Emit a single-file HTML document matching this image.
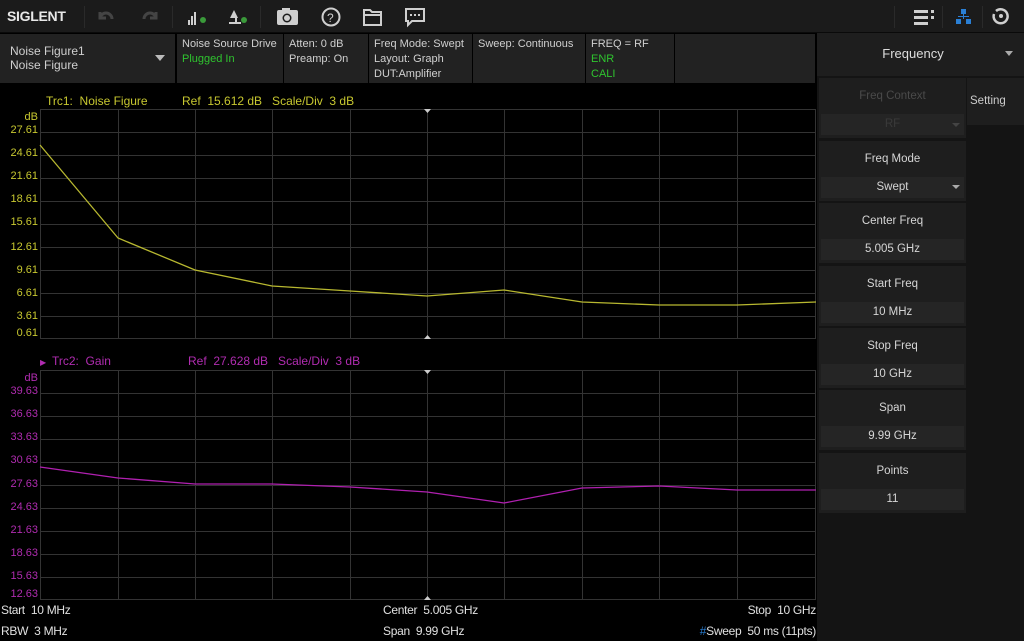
<!DOCTYPE html>
<html><head><meta charset="utf-8"><style>
*{margin:0;padding:0;box-sizing:border-box}
body{width:1024px;height:641px;background:#000;font-family:"Liberation Sans",sans-serif;position:relative;overflow:hidden;color:#ddd}
.a{position:absolute;white-space:nowrap}
svg text{white-space:pre}
.top{left:0;top:0;width:1024px;height:33px;background:#1b1b1b;border-bottom:1px solid #0a0a0a}
.info{top:34px;height:49px;background:#222;font-size:11px;line-height:15px;color:#d0d0d0;padding:3px 5px}
.g{color:#2fc42f}
.rp{left:817px;top:33px;width:207px;height:608px;background:#141414}
.item{left:819px;width:147px;height:60px;background:#1e1e1e;font-size:11.5px;color:#d6d6d6;text-align:center}
.item .l{position:absolute;left:0;width:147px;top:12px}
.item .v{position:absolute;left:2px;width:143px;top:36px;height:21px;line-height:21px;background:#252525}
.bt{font-size:12px;color:#e0e0e0;letter-spacing:-0.3px;white-space:pre}
</style></head><body>
<div class="a top"></div>
<div class="a" style="left:7px;top:8px;font-size:14px;font-weight:bold;color:#e8e8e8;letter-spacing:-0.3px">SIGLENT</div>
<svg class="a" style="left:0;top:0" width="1024" height="33">
<g stroke="#2a2a2a"><path d="M84.5 6v22M172.5 6v22M260.5 6v22M894.5 6v22M942.5 6v22M982.5 6v22"/></g>
<g stroke="#444" stroke-width="3" fill="none"><path d="M100 19a6 6 0 0 1 12 0M100 12v6h6"/><path d="M156 19a6 6 0 0 0-12 0M156 12v6h-6"/></g>
<g fill="#cfcfcf"><rect x="188" y="20" width="2" height="5"/><rect x="191" y="16" width="2" height="9"/><rect x="194" y="12" width="2" height="13"/><path d="M234 10l4 8h-8z"/><rect x="229" y="22" width="12" height="2"/><rect x="235" y="17" width="2" height="5"/></g>
<circle cx="203" cy="20" r="3" fill="#3a9a3a"/><circle cx="244" cy="20" r="3" fill="#3a9a3a"/>
<rect x="277" y="10" width="21" height="15" rx="2" fill="#cfcfcf"/><rect x="282" y="8" width="8" height="3" fill="#cfcfcf"/><circle cx="287" cy="18" r="4.5" fill="#1b1b1b"/><circle cx="287" cy="18" r="3" fill="#cfcfcf"/>
<circle cx="331" cy="17" r="8.5" stroke="#cfcfcf" stroke-width="2" fill="none"/><text x="327" y="22" font-size="12" fill="#cfcfcf" font-family="Liberation Sans">?</text>
<path d="M364 10h6l2 2h9v13h-17z M364 15h17" stroke="#cfcfcf" stroke-width="2" fill="none"/>
<path d="M406 9h18v12h-12l-4 4v-4h-2z" stroke="#cfcfcf" stroke-width="2" fill="none"/><g fill="#cfcfcf"><rect x="410" y="14" width="2" height="2"/><rect x="414" y="14" width="2" height="2"/><rect x="418" y="14" width="2" height="2"/></g>
<g fill="#cfcfcf"><rect x="914" y="10" width="14" height="3"/><rect x="914" y="16" width="14" height="3"/><rect x="914" y="22" width="14" height="3"/><rect x="931" y="10" width="3" height="3"/><rect x="931" y="16" width="3" height="3"/></g>
<g fill="#2a7fd4"><rect x="961" y="9" width="5" height="5"/><rect x="956" y="19" width="5" height="5"/><rect x="966" y="19" width="5" height="5"/><rect x="963" y="14" width="1" height="5"/><rect x="958" y="16" width="11" height="1"/></g>
<path d="M996 11a7 7 0 1 1-2 3" stroke="#cfcfcf" stroke-width="2.5" fill="none"/><circle cx="1001" cy="16" r="2" fill="#cfcfcf"/>
</svg>
<div class="a info" style="left:0;width:175px;padding:10px 10px;font-size:12px;line-height:14px">Noise Figure1<br>Noise Figure</div>
<div class="a" style="left:155px;top:55px;width:0;height:0;border-left:5px solid transparent;border-right:5px solid transparent;border-top:6px solid #bbb"></div>
<div class="a info" style="left:177px;width:106px">Noise Source Drive<br><span class="g">Plugged In</span></div>
<div class="a info" style="left:284px;width:84px">Atten: 0 dB<br>Preamp: On</div>
<div class="a info" style="left:369px;width:103px">Freq Mode: Swept<br>Layout: Graph<br>DUT:Amplifier</div>
<div class="a info" style="left:473px;width:112px">Sweep: Continuous</div>
<div class="a info" style="left:586px;width:88px">FREQ = RF<br><span class="g">ENR<br>CALI</span></div>
<div class="a info" style="left:675px;width:140px"></div>
<div class="a rp"></div>
<div class="a" style="left:817px;top:33px;width:207px;height:43px;background:#1e1e1e;font-size:13px;color:#ddd;text-align:center;line-height:42px;padding-right:15px">Frequency</div>
<div class="a" style="left:1005px;top:51px;border-left:4px solid transparent;border-right:4px solid transparent;border-top:5px solid #aaa"></div>
<div class="a" style="left:967px;top:78px;width:57px;height:47px;background:#1e1e1e;font-size:11.5px;color:#ccc;line-height:46px;padding-left:3px">Setting</div>
<div class="a item" style="top:78px"><div class="l" style="color:#4a4a4a">Freq Context</div><div class="v" style="color:#3a3a3a">RF</div></div>
<div class="a item" style="top:141px"><div class="l">Freq Mode</div><div class="v">Swept</div></div>
<div class="a" style="left:952px;top:185px;border-left:4px solid transparent;border-right:4px solid transparent;border-top:4px solid #aaa"></div>
<div class="a" style="left:952px;top:123px;border-left:4px solid transparent;border-right:4px solid transparent;border-top:4px solid #444"></div>
<div class="a item" style="top:203px"><div class="l">Center Freq</div><div class="v">5.005 GHz</div></div>
<div class="a item" style="top:266px"><div class="l">Start Freq</div><div class="v">10 MHz</div></div>
<div class="a item" style="top:328px"><div class="l">Stop Freq</div><div class="v">10 GHz</div></div>
<div class="a item" style="top:390px"><div class="l">Span</div><div class="v">9.99 GHz</div></div>
<div class="a item" style="top:453px"><div class="l">Points</div><div class="v">11</div></div>
<svg class="a" style="left:0;top:83px" width="817" height="520" font-family="Liberation Sans" font-size="11">
<g transform="translate(0,-83)">
<g stroke="#333" stroke-width="1">
<path d="M40 109.5H816M40 132.5H816M40 155.5H816M40 178.5H816M40 201.5H816M40 224.5H816M40 247.5H816M40 270.5H816M40 293.5H816M40 316.5H816M40 338.5H816"/>
<path d="M40.5 109V339M118.5 109V339M195.5 109V339M272.5 109V339M350.5 109V339M427.5 109V339M504.5 109V339M582.5 109V339M659.5 109V339M737.5 109V339M815.5 109V339"/>
<path d="M40 370.5H816M40 393.5H816M40 416.5H816M40 439.5H816M40 462.5H816M40 485.5H816M40 508.5H816M40 531.5H816M40 554.5H816M40 577.5H816M40 599.5H816"/>
<path d="M40.5 370V600M118.5 370V600M195.5 370V600M272.5 370V600M350.5 370V600M427.5 370V600M504.5 370V600M582.5 370V600M659.5 370V600M737.5 370V600M815.5 370V600"/>
</g>
<path d="M424 109h7l-3.5 4z M424 339h7l-3.5-4z M424 370h7l-3.5 4z M424 600h7l-3.5-4z" fill="#ccc"/>
<polyline fill="none" stroke="#b8b830" stroke-width="1.3" points="40,145 118,238 195,270 272,286 350,291 427,296 504,290 582,302 659,305 737,305 816,302"/>
<polyline fill="none" stroke="#b020b0" stroke-width="1.3" points="40,467 118,478 195,484 272,484 350,487 427,492 504,503 582,488 659,486 737,490 816,490"/>
<g fill="#c8c830" font-size="12"><text x="46" y="105">Trc1:  Noise Figure</text><text x="182" y="105">Ref  15.612 dB   Scale/Div  3 dB</text></g>
<g fill="#c8c830" text-anchor="end"><text x="38" y="120">dB</text><text x="38" y="133">27.61</text><text x="38" y="156">24.61</text><text x="38" y="179">21.61</text><text x="38" y="202">18.61</text><text x="38" y="225">15.61</text><text x="38" y="250">12.61</text><text x="38" y="273">9.61</text><text x="38" y="296">6.61</text><text x="38" y="319">3.61</text><text x="38" y="336">0.61</text></g>
<g fill="#b02cb0" font-size="12"><text x="40" y="365" font-size="8">▶</text><text x="52" y="365">Trc2:  Gain</text><text x="188" y="365">Ref  27.628 dB   Scale/Div  3 dB</text></g>
<g fill="#b02cb0" text-anchor="end"><text x="38" y="381">dB</text><text x="38" y="394">39.63</text><text x="38" y="417">36.63</text><text x="38" y="440">33.63</text><text x="38" y="463">30.63</text><text x="38" y="487">27.63</text><text x="38" y="510">24.63</text><text x="38" y="533">21.63</text><text x="38" y="556">18.63</text><text x="38" y="579">15.63</text><text x="38" y="597">12.63</text></g>
</g></svg>
<div class="a bt" style="left:1px;top:603px">Start  10 MHz</div>
<div class="a bt" style="left:1px;top:624px">RBW  3 MHz</div>
<div class="a bt" style="left:383px;top:603px">Center  5.005 GHz</div>
<div class="a bt" style="left:383px;top:624px">Span  9.99 GHz</div>
<div class="a bt" style="right:208px;top:603px">Stop  10 GHz</div>
<div class="a bt" style="right:208px;top:624px"><span style="color:#2a7fd4">#</span>Sweep  50 ms (11pts)</div>
</body></html>
